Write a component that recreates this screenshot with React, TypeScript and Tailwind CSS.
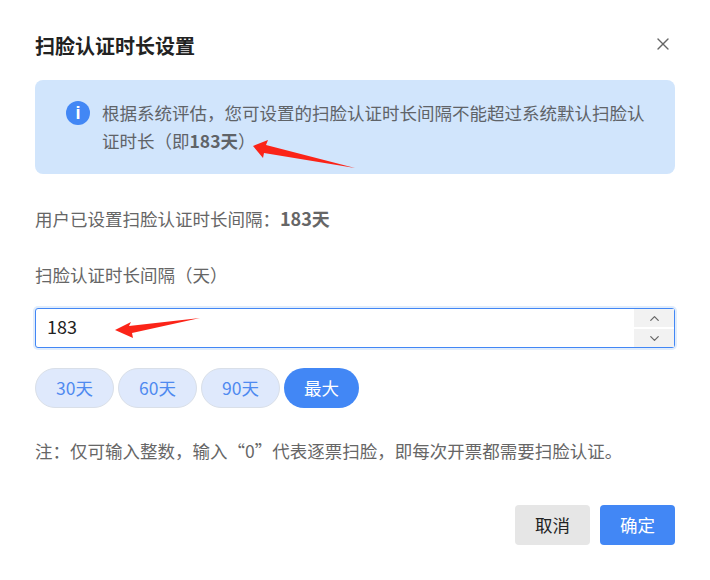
import { ChevronDown, ChevronUp, X } from 'lucide-react';

const presets = ['30天', '60天', '90天'];

const Arrow = ({ className, points, w, h }: { className: string; points: string; w: number; h: number }) => (
  <svg className={className} width={w} height={h} viewBox={`0 0 ${w} ${h}`}>
    <polygon points={points} fill="#fb2418" />
  </svg>
);

export default function App() {
  return (
    <div className="relative w-[710px] h-[580px] bg-white px-[35px] font-['Noto_Sans_CJK_SC','Noto_Sans',sans-serif] text-[17.5px] text-[#666666] overflow-hidden">
      {/* header */}
      <div className="flex items-center justify-between h-[80px] pt-[12px]">
        <h1 className="text-[20px] font-bold text-[#222222]">扫脸认证时长设置</h1>
        <X className="h-[20px] w-[20px] mr-[2px] -mt-[4px] text-[#666666]" strokeWidth={1.6} />
      </div>

      {/* notice */}
      <div className="flex h-[94px] rounded-lg bg-[#d1e5fc] pl-[31px] pr-[28px] pt-[21px]">
        <div className="flex h-[24px] w-[24px] shrink-0 items-center justify-center rounded-full bg-[#4287f5] font-['Liberation_Sans',sans-serif] text-[18px] font-bold text-white">
          i
        </div>
        <div className="ml-[12px] leading-[28px] text-[#5f6368] -mt-[2px]">
          <p>根据系统评估，您可设置的扫脸认证时长间隔不能超过系统默认扫脸认</p>
          <p>
            <span>证时长（即</span>
            <span className="font-bold">183天</span>
            <span>）</span>
          </p>
        </div>
      </div>

      <p className="mt-[31px] leading-[26px]">
        <span>用户已设置扫脸认证时长间隔：</span>
        <span className="font-bold text-[18px]">183天</span>
      </p>

      <label className="mt-[30px] block leading-[26px]">扫脸认证时长间隔（天）</label>

      {/* number input */}
      <div className="mt-[20px] flex h-[40px] items-center justify-between rounded-[3px] border border-[#4287f5] bg-white shadow-[0_0_0_2px_#e1edfc]">
        <span className="pl-[11px] pb-[3px] text-[18px] text-[#222222]">183</span>
        <div className="flex h-full w-[40px] flex-col justify-between">
          <div className="flex h-[18px] items-center justify-center bg-[#f2f2f2]">
            <ChevronUp className="h-[15px] w-[15px] text-[#666666]" strokeWidth={2} />
          </div>
          <div className="flex h-[18px] items-center justify-center bg-[#f2f2f2]">
            <ChevronDown className="h-[15px] w-[15px] text-[#666666]" strokeWidth={2} />
          </div>
        </div>
      </div>

      {/* quick picks */}
      <div className="mt-[20px] flex gap-[4px]">
        {presets.map((p) => (
          <button key={p} className="h-[40px] w-[79px] rounded-[20px] border border-[#d9dfe8] bg-[#dfe9fc] text-[#4f8af0]">
            {p}
          </button>
        ))}
        <button className="h-[40px] w-[75px] rounded-[20px] bg-[#4287f5] text-white">最大</button>
      </div>

      <p className="mt-[30px] leading-[26px]">注：仅可输入整数，输入“0”代表逐票扫脸，即每次开票都需要扫脸认证。</p>

      {/* footer */}
      <div className="mt-[41px] flex justify-end gap-[10px]">
        <button className="h-[40px] w-[75px] rounded-[4px] bg-[#e6e6e6] text-[#222222]">取消</button>
        <button className="h-[40px] w-[75px] rounded-[4px] bg-[#4287f5] text-white">确定</button>
      </div>

      {/* red annotation arrows */}
      <Arrow className="absolute left-[253px] top-[140px]" w={104} h={30} points="0,6 15,0 13,5 102,28 11,13 10,18" />
      <Arrow className="absolute left-[114px] top-[316px]" w={88} h={24} points="1,14 17,6 15,10 86,2 18,17 19,22" />
    </div>
  );
}
